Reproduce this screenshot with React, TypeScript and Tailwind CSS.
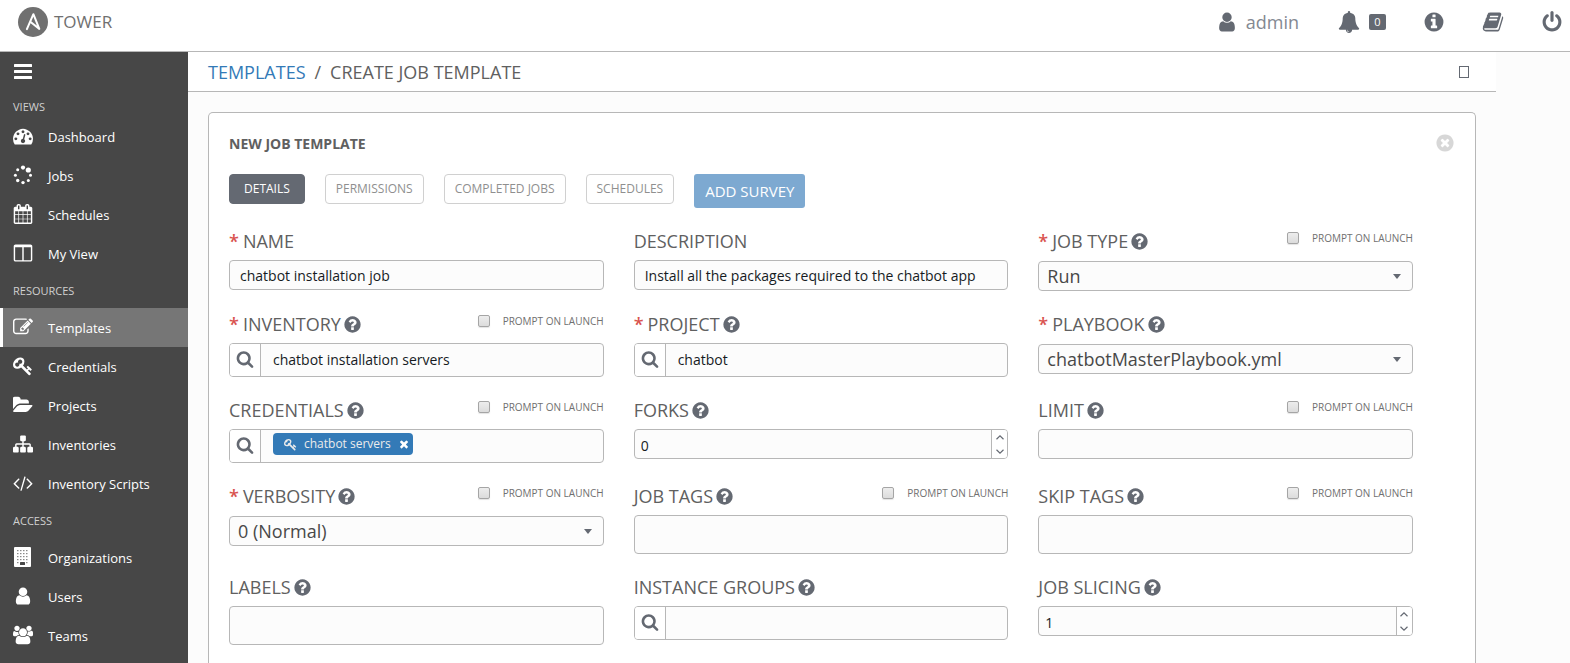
import React, { useId } from "react";

const PATHS = {
  user: "M1536 1399q0 109-62.5 187t-150.5 78h-854q-88 0-150.5-78t-62.5-187q0-85 8.5-160.5t31.5-152 58.5-131 94-89 134.5-34.5q131 128 313 128t313-128q76 0 134.5 34.5t94 89 58.5 131 31.5 152 8.5 160.5zm-256-887q0 159-112.5 271.5t-271.5 112.5-271.5-112.5-112.5-271.5 112.5-271.5 271.5-112.5 271.5 112.5 112.5 271.5z",
  bell: "M912 1696q0-16-16-16-59 0-101.5-42.5t-42.5-101.5q0-16-16-16t-16 16q0 73 51.5 124.5t124.5 51.5q16 0 16-16zm816-288q0 52-38 90t-90 38h-448q0 106-75 181t-181 75-181-75-75-181h-448q-52 0-90-38t-38-90q50-42 91-88t85-119.5 74.5-158.5 50-206 19.5-260q0-152 117-282.5t307-158.5q-8-19-8-39 0-40 28-68t68-28 68 28 28 68q0 20-8 39 190 28 307 158.5t117 282.5q0 139 19.5 260t50 206 74.5 158.5 85 119.5 91 88z",
  info: "M1152 1376v-160q0-14-9-23t-23-9h-96v-512q0-14-9-23t-23-9h-320q-14 0-23 9t-9 23v160q0 14 9 23t23 9h96v320h-96q-14 0-23 9t-9 23v160q0 14 9 23t23 9h448q14 0 23-9t9-23zm-128-896v-160q0-14-9-23t-23-9h-192q-14 0-23 9t-9 23v160q0 14 9 23t23 9h192q14 0 23-9t9-23zm640 416q0 209-103 385.5t-279.5 279.5-385.5 103-385.5-103-279.5-279.5-103-385.5 103-385.5 279.5-279.5 385.5-103 385.5 103 279.5 279.5 103 385.5z",
  book: "M1703 478q40 57 18 129l-275 906q-19 64-76.5 107.5t-122.5 43.5h-923q-77 0-148.5-53.5t-99.5-131.5q-24-67-2-127 0-4 3-27t4-37q1-8-3-21.5t-3-19.5q2-11 8-21t16.5-23.5 16.5-23.5q23-38 45-91.5t30-91.5q3-10 .5-30t-.5-28q3-11 17-28t17-23q21-36 42-92t25-90q1-9-2.5-32t.5-28q4-13 22-30.5t22-22.5q19-26 42.5-84.5t27.5-96.5q1-8-3-25.5t-2-26.5q2-8 9-18t18-23 17-21q8-12 16.5-30.5t15-35 16-36 19.5-32 26.5-23.5 36-11.5 47.5 5.5l-1 3q38-9 51-9h761q74 0 114 56t18 130l-274 906q-36 119-71.5 153.5t-128.5 34.5h-869q-27 0-38 15-11 16-1 43 24 70 144 70h923q29 0 56-15.5t35-41.5l300-987q7-22 5-57 38 15 59 43zm-1064 2q-4 13 2 22.5t20 9.5h608q13 0 25.5-9.5t16.5-22.5l21-64q4-13-2-22.5t-20-9.5h-608q-13 0-25.5 9.5t-16.5 22.5zm-83 256q-4 13 2 22.5t20 9.5h608q13 0 25.5-9.5t16.5-22.5l21-64q4-13-2-22.5t-20-9.5h-608q-13 0-25.5 9.5t-16.5 22.5z",
  power: "M1664 896q0 156-61 298t-164 245-245 164-298 61-298-61-245-164-164-245-61-298q0-182 80.5-343t226.5-270q43-32 95.5-25t83.5 50q32 42 24.5 94.5t-49.5 84.5q-98 74-151.5 181t-53.5 228q0 104 40.5 198.5t109.5 163.5 163.5 109.5 198.5 40.5 198.5-40.5 163.5-109.5 109.5-163.5 40.5-198.5q0-121-53.5-228t-151.5-181q-42-32-49.5-84.5t24.5-94.5q31-43 84-50t95 25q146 109 226.5 270t80.5 343zm-640-768v640q0 52-38 90t-90 38-90-38-38-90v-640q0-52 38-90t90-38 90 38 38 90z",
  close: "M1277 1122q0-26-19-45l-181-181 181-181q19-19 19-45 0-27-19-46l-90-90q-19-19-46-19-26 0-45 19l-181 181-181-181q-19-19-45-19-27 0-46 19l-90 90q-19 19-19 46 0 26 19 45l181 181-181 181q-19 19-19 45 0 27 19 46l90 90q19 19 46 19 26 0 45-19l181-181 181 181q19 19 45 19 27 0 46-19l90-90q19-19 19-46zm387-226q0 209-103 385.5t-279.5 279.5-385.5 103-385.5-103-279.5-279.5-103-385.5 103-385.5 279.5-279.5 385.5-103 385.5 103 279.5 279.5 103 385.5z",
  help: "M1024 1376v-192q0-14-9-23t-23-9h-192q-14 0-23 9t-9 23v192q0 14 9 23t23 9h192q14 0 23-9t9-23zm256-672q0-88-55.5-163t-138.5-116-170-41q-243 0-371 213-15 24 8 42l132 100q7 6 19 6 16 0 25-12 53-68 86-92 34-24 86-24 48 0 85.5 26t37.5 59q0 38-20 61t-68 45q-63 28-115.5 86.5t-52.5 125.5v36q0 14 9 23t23 9h192q14 0 23-9t9-23q0-19 21.5-49.5t54.5-49.5q32-18 49-28.5t46-35 44.5-48 28-60.5 12.5-81zm384 192q0 209-103 385.5t-279.5 279.5-385.5 103-385.5-103-279.5-279.5-103-385.5 103-385.5 279.5-279.5 385.5-103 385.5 103 279.5 279.5 103 385.5z",
  search: "M1216 832q0-185-131.5-316.5t-316.5-131.5-316.5 131.5-131.5 316.5 131.5 316.5 316.5 131.5 316.5-131.5 131.5-316.5zm512 832q0 52-38 90t-90 38q-54 0-90-38l-343-342q-179 124-399 124-143 0-273.5-55.5t-225-150-150-225-55.5-273.5 55.5-273.5 150-225 225-150 273.5-55.5 273.5 55.5 225 150 150 225 55.5 273.5q0 220-124 399l343 343q37 37 37 90z",
  key: "M832 512q0-80-56-136t-136-56-136 56-56 136q0 42 19 83-41-19-83-19-80 0-136 56t-56 136 56 136 136 56 136-56 56-136q0-42-19-83 41 19 83 19 80 0 136-56t56-136zm851 704q0 17-49 66t-66 49q-9 0-28.5-16t-36.5-33-38.5-40-24.5-26l-96 96 220 220q28 28 28 68 0 42-39 81t-81 39q-40 0-68-28l-671-671q-176 131-365 131-163 0-265.5-102.5t-102.5-265.5q0-160 95-313t248-248 313-95q163 0 265.5 102.5t102.5 265.5q0 189-131 365l355 355 96-96q-3-3-26-24.5t-40-38.5-33-36.5-16-28.5q0-17 49-66t66-49q13 0 23 10 6 6 46 44.5t82 79.5 86.5 86 73 78 28.5 41z",
  edit: "M888 1184l116-116-152-152-116 116v56h96v96h56zm440-720q-16-16-33 1l-350 350q-17 17-1 33t33-1l350-350q17-17 1-33zm80 594v190q0 119-84.5 203.5t-203.5 84.5h-832q-119 0-203.5-84.5t-84.5-203.5v-832q0-119 84.5-203.5t203.5-84.5h832q63 0 117 25 15 7 18 23 3 17-9 29l-49 49q-14 14-32 8-23-6-45-6h-832q-66 0-113 47t-47 113v832q0 66 47 113t113 47h832q66 0 113-47t47-113v-126q0-13 9-22l64-64q15-15 35-7t20 29zm-96-738l288 288-672 672h-288v-288zm444 132l-92 92-288-288 92-92q28-28 68-28t68 28l152 152q28 28 28 68t-28 68z",
  gauge: "M384 1152q0-53-37.5-90.5t-90.5-37.5-90.5 37.5-37.5 90.5 37.5 90.5 90.5 37.5 90.5-37.5 37.5-90.5zm192-448q0-53-37.5-90.5t-90.5-37.5-90.5 37.5-37.5 90.5 37.5 90.5 90.5 37.5 90.5-37.5 37.5-90.5zm428 481l101-382q6-26-7.5-48.5t-38.5-29.5-48 6.5-30 39.5l-101 382q-60 5-107 43.5t-63 98.5q-20 77 20 146t117 89 146-20 89-117q16-60-6-117t-72-91zm660-33q0-53-37.5-90.5t-90.5-37.5-90.5 37.5-37.5 90.5 37.5 90.5 90.5 37.5 90.5-37.5 37.5-90.5zm-640-640q0-53-37.5-90.5t-90.5-37.5-90.5 37.5-37.5 90.5 37.5 90.5 90.5 37.5 90.5-37.5 37.5-90.5zm448 192q0-53-37.5-90.5t-90.5-37.5-90.5 37.5-37.5 90.5 37.5 90.5 90.5 37.5 90.5-37.5 37.5-90.5zm320 448q0 261-141 483-19 29-54 29h-1402q-35 0-54-29-141-221-141-483 0-182 71-348t191-286 286-191 348-71 348 71 286 191 191 286 71 348z",
  calendar: "M192 1664h288v-288h-288v288zm352 0h320v-288h-320v288zm-352-352h288v-320h-288v320zm352 0h320v-320h-320v320zm-352-384h288v-288h-288v288zm736 736h320v-288h-320v288zm-384-736h320v-288h-320v288zm768 736h288v-288h-288v288zm-384-352h320v-320h-320v320zm-352-864v-288q0-13-9.5-22.5t-22.5-9.5h-64q-13 0-22.5 9.5t-9.5 22.5v288q0 13 9.5 22.5t22.5 9.5h64q13 0 22.5-9.5t9.5-22.5zm736 864h288v-320h-288v320zm-384-384h320v-288h-320v288zm384 0h288v-288h-288v288zm32-480v-288q0-13-9.5-22.5t-22.5-9.5h-64q-13 0-22.5 9.5t-9.5 22.5v288q0 13 9.5 22.5t22.5 9.5h64q13 0 22.5-9.5t9.5-22.5zm384-64v1280q0 52-38 90t-90 38h-1408q-52 0-90-38t-38-90v-1280q0-52 38-90t90-38h128v-96q0-66 47-113t113-47h64q66 0 113 47t47 113v96h384v-96q0-66 47-113t113-47h64q66 0 113 47t47 113v96h128q52 0 90 38t38 90z",
  columns: "M224 1536h608v-1152h-640v1120q0 13 9.5 22.5t22.5 9.5zm1376-32v-1120h-640v1152h608q13 0 22.5-9.5t9.5-22.5zm128-1216v1216q0 66-47 113t-113 47h-1344q-66 0-113-47t-47-113v-1216q0-66 47-113t113-47h1344q66 0 113 47t47 113z",
  folder: "M1815 952q0 31-31 66l-336 396q-43 51-120.5 86.5t-143.5 35.5h-1088q-34 0-60.5-13t-26.5-43q0-31 31-66l336-396q43-51 120.5-86.5t143.5-35.5h1088q34 0 60.5 13t26.5 43zm-343-344v160h-832q-94 0-197 47.5t-164 119.5l-337 396-5 6q0-4-.5-12.5t-.5-12.5v-960q0-92 66-158t158-66h320q92 0 158 66t66 158v32h544q92 0 158 66t66 158z",
  sitemap: "M1792 1248v320q0 40-28 68t-68 28h-320q-40 0-68-28t-28-68v-320q0-40 28-68t68-28h96v-192h-512v192h96q40 0 68 28t28 68v320q0 40-28 68t-68 28h-320q-40 0-68-28t-28-68v-320q0-40 28-68t68-28h96v-192h-512v192h96q40 0 68 28t28 68v320q0 40-28 68t-68 28h-320q-40 0-68-28t-28-68v-320q0-40 28-68t68-28h96v-192q0-52 38-90t90-38h512v-192h-96q-40 0-68-28t-28-68v-320q0-40 28-68t68-28h320q40 0 68 28t28 68v320q0 40-28 68t-68 28h-96v192h512q52 0 90 38t38 90v192h96q40 0 68 28t28 68z",
  code: "M617 1399l-50 50q-10 10-23 10t-23-10l-466-466q-10-10-10-23t10-23l466-466q10-10 23-10t23 10l50 50q10 10 10 23t-10 23l-393 393 393 393q10 10 10 23t-10 23zm591-1067l-373 1291q-4 13-15.5 19.5t-23.5 2.5l-62-17q-13-4-19.5-15.5t-2.5-24.5l373-1291q4-13 15.5-19.5t23.5-2.5l62 17q13 4 19.5 15.5t2.5 24.5zm657 651l-466 466q-10 10-23 10t-23-10l-50-50q-10-10-10-23t10-23l393-393-393-393q-10-10-10-23t10-23l50-50q10-10 23-10t23 10l466 466q10 10 10 23t-10 23z",
  users: "M593 896q-162 5-265 128h-134q-82 0-138-40.5t-56-118.5q0-353 124-353 6 0 43.5 21t97.5 42.5 119 21.5q67 0 133-23-5 37-5 66 0 159 93 290zm1071 637q0 120-73 189.5t-194 69.5h-874q-121 0-194-69.5t-73-189.5q0-53 3.5-103.5t14-109 26.5-108.5 43-97.5 62-81 85.5-53.5 111.5-20q10 0 43 21.5t73 48 107 48 135 21.5 135-21.5 107-48 73-48 43-21.5q61 0 111.5 20t85.5 53.5 62 81 43 97.5 26.5 108.5 14 109 3.5 103.5zm-1024-1277q0 106-75 181t-181 75-181-75-75-181 75-181 181-75 181 75 75 181zm704 384q0 159-112.5 271.5t-271.5 112.5-271.5-112.5-112.5-271.5 112.5-271.5 271.5-112.5 271.5 112.5 112.5 271.5zm576 225q0 78-56 118.5t-138 40.5h-134q-103-123-265-128 93-131 93-290 0-29-5-66 66 23 133 23 59 0 119-21.5t97.5-42.5 43.5-21q124 0 124 353zm-128-609q0 106-75 181t-181 75-181-75-75-181 75-181 181-75 181 75 75 181z",
  times: "M1490 1322q0 40-28 68l-136 136q-28 28-68 28t-68-28l-294-294-294 294q-28 28-68 28t-68-28l-136-136q-28-28-28-68t28-68l294-294-294-294q-28-28-28-68t28-68l136-136q28-28 68-28t68 28l294 294 294-294q28-28 68-28t68 28l136 136q28 28 28 68t-28 68l-294 294 294 294q28 28 28 68z",
};

type IconName = keyof typeof PATHS;

const WIDE: Partial<Record<IconName, number>> = { folder: 1856, code: 1920, users: 1920 };

function Icon({ name, className }: { name: IconName; className: string }) {
  return (
    <svg viewBox={`0 0 ${WIDE[name] ?? 1792} 1792`} className={className} fill="currentColor" aria-hidden="true">
      <path d={PATHS[name]} />
    </svg>
  );
}

function SpinnerIcon() {
  const dots = [
    [10, 2.6, 2.1],
    [15.3, 5, 2.6],
    [17.5, 10.2, 1.5],
    [15.3, 15.5, 1.5],
    [10, 17.6, 1.7],
    [4.7, 15.5, 1.7],
    [2.4, 10.2, 1.5],
    [4.7, 4.8, 1.5],
  ];
  return (
    <svg viewBox="0 0 20 20" className="size-5" fill="currentColor" aria-hidden="true">
      {dots.map(([x, y, r]) => (
        <circle key={`${x}-${y}`} cx={x} cy={y} r={r} />
      ))}
    </svg>
  );
}

function BuildingIcon() {
  return (
    <svg viewBox="0 0 20 20" className="size-5" aria-hidden="true">
      <rect x="1" y="0" width="17" height="20" rx="1" fill="#fff" />
      {[3, 6, 9, 12].flatMap((y) =>
        [4, 7, 10, 13].map((x) => (
          <rect key={`${x}-${y}`} x={x + 0.2} y={y} width="1.2" height="1.2" fill="#6d6d6d" />
        ))
      )}
      <rect x="4.2" y="15" width="1.2" height="1.2" fill="#6d6d6d" />
      <rect x="13.2" y="15" width="1.2" height="1.2" fill="#6d6d6d" />
      <rect x="7" y="15" width="5" height="3" rx="0.5" fill="#474747" />
    </svg>
  );
}

function Logo() {
  return (
    <svg viewBox="0 0 30 30" className="size-[30px]" aria-hidden="true">
      <circle cx="15" cy="15" r="15" fill="#707070" />
      <path
        d="M8.9 22.2 L15.4 7.2 L21.3 21.9 L12.3 14.8"
        fill="none"
        stroke="#fff"
        strokeWidth="2"
        strokeLinejoin="round"
        strokeLinecap="round"
      />
    </svg>
  );
}

type NavItem = { label: string; icon: React.ReactNode; active?: boolean };

const nav: { title: string; items: NavItem[] }[] = [
  {
    title: "VIEWS",
    items: [
      { label: "Dashboard", icon: <Icon name="gauge" className="size-5" /> },
      { label: "Jobs", icon: <SpinnerIcon /> },
      { label: "Schedules", icon: <Icon name="calendar" className="size-5" /> },
      { label: "My View", icon: <Icon name="columns" className="size-5" /> },
    ],
  },
  {
    title: "RESOURCES",
    items: [
      { label: "Templates", icon: <Icon name="edit" className="size-5" />, active: true },
      { label: "Credentials", icon: <Icon name="key" className="size-5" /> },
      { label: "Projects", icon: <Icon name="folder" className="size-5" /> },
      { label: "Inventories", icon: <Icon name="sitemap" className="size-5" /> },
      { label: "Inventory Scripts", icon: <Icon name="code" className="size-5" /> },
    ],
  },
  {
    title: "ACCESS",
    items: [
      { label: "Organizations", icon: <BuildingIcon /> },
      { label: "Users", icon: <Icon name="user" className="size-5" /> },
      { label: "Teams", icon: <Icon name="users" className="size-5" /> },
    ],
  },
];

function Sidebar() {
  return (
    <nav className="w-[188px] shrink-0 bg-[#474747] text-white">
      <button type="button" aria-label="Toggle menu" className="flex h-[45px] items-start pt-3 pl-[14px]">
        <svg viewBox="0 0 18 15" className="h-[15px] w-[18px]" fill="currentColor" aria-hidden="true">
          <rect y="0" width="18" height="3" rx="0.5" />
          <rect y="6" width="18" height="3" rx="0.5" />
          <rect y="12" width="18" height="3" rx="0.5" />
        </svg>
      </button>
      {nav.map((group, index) => (
        <section key={group.title}>
          <h2
            className={
              index === 0
                ? "flex h-5 items-center pl-[13px] text-[11px] text-[#d0d0d0]"
                : "flex h-[35px] items-center pt-px pl-[13px] text-[11px] text-[#d0d0d0]"
            }
          >
            {group.title}
          </h2>
          <ul>
            {group.items.map((item) => (
              <li key={item.label}>
                <a
                  href="#"
                  className={
                    item.active
                      ? "flex h-[39px] items-center gap-[15px] border-l-3 border-white bg-[#767676] pl-[10px] text-[13px]"
                      : "flex h-[39px] items-center gap-[15px] border-l-3 border-transparent pl-[10px] text-[13px]"
                  }
                >
                  <span className="pb-[2px]">{item.icon}</span>
                  <span className="pt-[3px]">{item.label}</span>
                </a>
              </li>
            ))}
          </ul>
        </section>
      ))}
    </nav>
  );
}

function Header() {
  return (
    <header className="flex h-[52px] items-start justify-between border-b border-[#b7b7b7] bg-white pt-[7px] pr-[7px] pl-[18px] text-[#646972]">
      <a href="#" className="flex items-center gap-[6px] text-[17px] leading-[30px] text-[#707070]">
        <Logo />
        TOWER
      </a>
      <div className="flex h-[30px] items-center gap-[37px]">
        <a href="#" className="flex items-center gap-2 pr-[2px] text-[18px] text-[#848992]">
          <Icon name="user" className="size-[22px] text-[#646972]" />
          admin
        </a>
        <button type="button" aria-label="Notifications" className="flex items-center gap-[9px]">
          <Icon name="bell" className="size-[22px]" />
          <span className="flex h-4 w-[17px] items-center justify-center rounded-xs bg-[#646972] text-[11px] text-white">
            0
          </span>
        </button>
        <button type="button" aria-label="About">
          <Icon name="info" className="size-[22px]" />
        </button>
        <button type="button" aria-label="Documentation">
          <Icon name="book" className="size-[22px]" />
        </button>
        <button type="button" aria-label="Log out">
          <Icon name="power" className="size-[22px]" />
        </button>
      </div>
    </header>
  );
}

type FieldProps = {
  label: string;
  required?: boolean;
  help?: boolean;
  prompt?: boolean;
  children: (id: string) => React.ReactNode;
};

function Field({ label, required, help, prompt, children }: FieldProps) {
  const id = useId();
  return (
    <div>
      <div className="flex h-[31px] items-start justify-between">
        <div className="flex items-center gap-[2px]">
          <label htmlFor={id} className="text-[18px] leading-6 text-[#606060]">
            {required && <span className="pr-1 font-semibold text-[#d9534f]">*</span>}
            {label}
          </label>
          {help && (
            <button type="button" aria-label={`Help for ${label.toLowerCase()}`} className="text-[#646972]">
              <Icon name="help" className="size-[19px]" />
            </button>
          )}
        </div>
        {prompt && (
          <label className="flex items-center gap-[13px] text-[10px] leading-[18px] text-[#707070]">
            <input
              type="checkbox"
              className="size-[12px] appearance-none rounded-xs border border-[#a5a5a5] bg-linear-to-b from-[#ededed] to-[#dcdcdc] shadow-[0_1px_1px_#e4e4e4] checked:bg-[#646972]"
            />
            PROMPT ON LAUNCH
          </label>
        )}
      </div>
      {children(id)}
    </div>
  );
}

function TextInput({ id, value }: { id: string; value?: string }) {
  return (
    <input
      id={id}
      type="text"
      defaultValue={value}
      className="block h-[30px] w-full rounded-[4px] border border-[#b7b7b7] bg-[#fcfcfc] px-[10px] text-[14px] text-[#161b1f]"
    />
  );
}

function TagInput({ id }: { id: string }) {
  return (
    <input
      id={id}
      type="text"
      className="block h-[39px] w-full rounded-[4px] border border-[#b7b7b7] bg-[#fcfcfc] px-[10px] text-[14px] text-[#161b1f]"
    />
  );
}

function SelectInput({ id, value }: { id: string; value: string }) {
  return (
    <div className="grid pt-px">
      <select
        id={id}
        className="col-start-1 row-start-1 h-[30px] w-full appearance-none rounded-[4px] border border-[#b7b7b7] bg-[#fcfcfc] px-2 text-[18px] leading-7 text-[#484848]"
      >
        <option>{value}</option>
      </select>
      <svg
        viewBox="0 0 8 5"
        className="pointer-events-none col-start-1 row-start-1 mr-3 h-[5px] w-2 self-center justify-self-end"
        fill="#646972"
        aria-hidden="true"
      >
        <path d="M0 0h8L4 5z" />
      </svg>
    </div>
  );
}

function NumberInput({ id, value }: { id: string; value: number }) {
  return (
    <div className="flex h-[30px] overflow-hidden rounded-[4px] border border-[#b7b7b7] bg-[#fcfcfc]">
      <input
        id={id}
        type="number"
        defaultValue={value}
        className="min-w-0 flex-1 appearance-none pt-[3px] pl-[6px] text-[14px] text-[#161b1f] [appearance:textfield]"
      />
      <div className="flex w-4 flex-col border-l border-[#b7b7b7] bg-white text-[#646972]">
        <button type="button" aria-label="Increase" className="flex flex-1 items-center justify-center">
          <svg viewBox="0 0 8 5" className="h-[5px] w-2" fill="none" stroke="currentColor" strokeWidth="1.2">
            <path d="M0.5 4.2 4 0.9 7.5 4.2" />
          </svg>
        </button>
        <button type="button" aria-label="Decrease" className="flex flex-1 items-center justify-center">
          <svg viewBox="0 0 8 5" className="h-[5px] w-2" fill="none" stroke="currentColor" strokeWidth="1.2">
            <path d="M0.5 0.8 4 4.1 7.5 0.8" />
          </svg>
        </button>
      </div>
    </div>
  );
}

function LookupInput({ id, value, chip }: { id: string; value?: string; chip?: string }) {
  return (
    <div className="flex h-[34px] overflow-hidden rounded-[4px] border border-[#b7b7b7] bg-[#fcfcfc]">
      <button
        type="button"
        aria-label="Search"
        className="flex w-[31px] shrink-0 items-center justify-center border-r border-[#b7b7b7] bg-white pb-[2px] text-[#646972]"
      >
        <Icon name="search" className="size-[18px]" />
      </button>
      {chip && (
        <span className="mt-[3px] ml-3 flex h-[22px] shrink-0 items-center rounded-[4px] bg-[#337ab7] pr-[3px] pl-[11px] text-[12px] text-[#ebebeb]">
          <Icon name="key" className="mr-[7px] size-[13px]" />
          {chip}
          <button type="button" aria-label={`Remove ${chip}`} className="ml-[7px] text-white">
            <Icon name="times" className="size-3" />
          </button>
        </span>
      )}
      <input
        id={id}
        type="text"
        defaultValue={value}
        className="min-w-0 flex-1 px-3 pb-[2px] text-[14px] text-[#161b1f]"
      />
    </div>
  );
}

const tabs = ["PERMISSIONS", "COMPLETED JOBS", "SCHEDULES"];

export default function App() {
  return (
    <div className="flex min-h-screen flex-col bg-[#fcfcfc] font-['Open_Sans',sans-serif]">
      <Header />
      <div className="flex flex-1">
        <Sidebar />
        <main className="mr-[74px] flex min-w-0 flex-1 flex-col">
          <div className="flex h-10 items-center justify-between border-b border-[#b7b7b7] bg-white pt-[2px] pr-[27px] pl-5 text-[18px] text-[#606060]">
            <nav aria-label="Breadcrumb" className="flex gap-[9px]">
              <a href="#" className="text-[#337ab7]">
                TEMPLATES
              </a>
              <span>/</span>
              <span>CREATE JOB TEMPLATE</span>
            </nav>
            <button type="button" aria-label="Activity stream" className="mb-[2px] h-3 w-[10px] border border-[#646972]" />
          </div>
          <div className="flex flex-1 flex-col px-5 pt-5">
            <section className="flex-1 rounded-t-[5px] border border-b-0 border-[#b7b7b7] bg-white px-5 pt-5">
              <div className="flex h-[21px] items-start justify-between">
                <h1 className="text-[14px] leading-[21px] font-bold text-[#606060]">NEW JOB TEMPLATE</h1>
                <button type="button" aria-label="Close" className="text-[#d7d7d7]">
                  <Icon name="close" className="size-5" />
                </button>
              </div>
              <div className="mt-5 flex items-start gap-5">
                <button
                  type="button"
                  className="h-[30px] rounded-[4px] border border-[#646972] bg-[#646972] px-[14px] text-[12px] text-white"
                >
                  DETAILS
                </button>
                {tabs.map((tab) => (
                  <button
                    key={tab}
                    type="button"
                    className="h-[30px] rounded-[4px] border border-[#d0d0d0] bg-white px-[10px] text-[12px] text-[#8f8f8f]"
                  >
                    {tab}
                  </button>
                ))}
                <button type="button" className="h-[34px] rounded-[3px] bg-[#7da9d1] px-[11px] text-[15px] text-white">
                  ADD SURVEY
                </button>
              </div>
              <form className="mt-[21px] mr-[42px] grid grid-cols-3 gap-x-[30px] gap-y-[21px]">
                <Field label="NAME" required>
                  {(id) => <TextInput id={id} value="chatbot installation job" />}
                </Field>
                <Field label="DESCRIPTION">
                  {(id) => <TextInput id={id} value="Install all the packages required to the chatbot app" />}
                </Field>
                <Field label="JOB TYPE" required help prompt>
                  {(id) => <SelectInput id={id} value="Run" />}
                </Field>
                <Field label="INVENTORY" required help prompt>
                  {(id) => <LookupInput id={id} value="chatbot installation servers" />}
                </Field>
                <Field label="PROJECT" required help>
                  {(id) => <LookupInput id={id} value="chatbot" />}
                </Field>
                <Field label="PLAYBOOK" required help>
                  {(id) => <SelectInput id={id} value="chatbotMasterPlaybook.yml" />}
                </Field>
                <Field label="CREDENTIALS" help prompt>
                  {(id) => <LookupInput id={id} chip="chatbot servers" />}
                </Field>
                <Field label="FORKS" help>
                  {(id) => <NumberInput id={id} value={0} />}
                </Field>
                <Field label="LIMIT" help prompt>
                  {(id) => <TextInput id={id} />}
                </Field>
                <Field label="VERBOSITY" required help prompt>
                  {(id) => <SelectInput id={id} value="0 (Normal)" />}
                </Field>
                <Field label="JOB TAGS" help prompt>
                  {(id) => <TagInput id={id} />}
                </Field>
                <Field label="SKIP TAGS" help prompt>
                  {(id) => <TagInput id={id} />}
                </Field>
                <Field label="LABELS" help>
                  {(id) => <TagInput id={id} />}
                </Field>
                <Field label="INSTANCE GROUPS" help>
                  {(id) => <LookupInput id={id} />}
                </Field>
                <Field label="JOB SLICING" help>
                  {(id) => <NumberInput id={id} value={1} />}
                </Field>
              </form>
            </section>
          </div>
        </main>
      </div>
    </div>
  );
}
